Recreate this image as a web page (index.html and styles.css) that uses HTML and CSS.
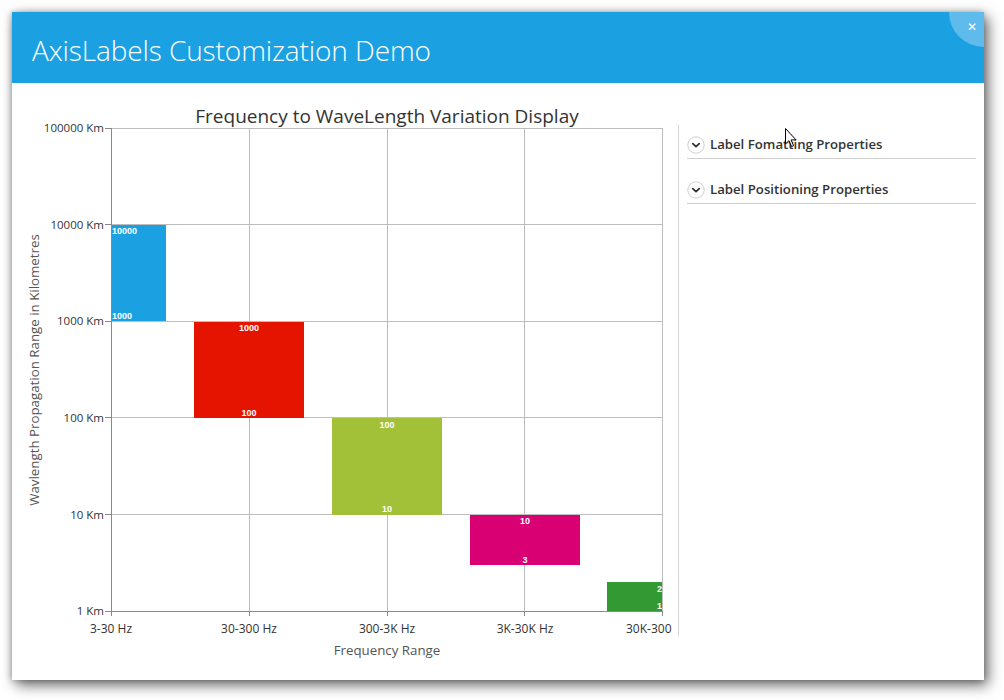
FILE: index.html
```html
<!DOCTYPE html>
<html>
<head>
<meta charset="utf-8">
<link rel="stylesheet" href="styles.css">
</head>
<body>
<div class="window">
  <div class="titlebar">
    <h1 class="title">AxisLabels Customization Demo</h1>
    <div class="close">&#x2715;</div>
  </div>
  <div class="content">
    <svg class="chart" width="660" height="597" viewBox="12 83 660 597">
      <text class="chart-title" x="387" y="123">Frequency to WaveLength Variation Display</text>
      <g class="grid">
        <line x1="111" y1="128.5" x2="662" y2="128.5"/>
        <line x1="111" y1="224.5" x2="662" y2="224.5"/>
        <line x1="111" y1="321.5" x2="662" y2="321.5"/>
        <line x1="111" y1="417.5" x2="662" y2="417.5"/>
        <line x1="111" y1="514.5" x2="662" y2="514.5"/>
        <line x1="249.5" y1="128" x2="249.5" y2="611"/>
        <line x1="387.5" y1="128" x2="387.5" y2="611"/>
        <line x1="524.5" y1="128" x2="524.5" y2="611"/>
        <line x1="662.5" y1="128" x2="662.5" y2="611"/>
      </g>
      <g class="bars">
        <rect x="111" y="225" width="55" height="96" fill="#1ba1e2"/>
        <rect x="194" y="322" width="110" height="96" fill="#e51400"/>
        <rect x="332" y="418" width="110" height="97" fill="#a2c139"/>
        <rect x="470" y="515" width="110" height="50" fill="#d80073"/>
        <rect x="607" y="582" width="55" height="29" fill="#339933"/>
      </g>
      <g class="bar-labels">
        <text x="112" y="234" class="start">10000</text>
        <text x="112" y="319" class="start">1000</text>
        <text x="249" y="331">1000</text>
        <text x="249" y="416">100</text>
        <text x="387" y="428">100</text>
        <text x="387" y="512">10</text>
        <text x="525" y="524">10</text>
        <text x="525" y="563">3</text>
        <text x="662" y="592" class="end">2</text>
        <text x="662" y="609" class="end">1</text>
      </g>
      <g class="axis">
        <line x1="111.5" y1="128" x2="111.5" y2="612"/>
        <line x1="111" y1="611.5" x2="663" y2="611.5"/>
        <line x1="105" y1="128.5" x2="111" y2="128.5"/>
        <line x1="105" y1="224.5" x2="111" y2="224.5"/>
        <line x1="105" y1="321.5" x2="111" y2="321.5"/>
        <line x1="105" y1="417.5" x2="111" y2="417.5"/>
        <line x1="105" y1="514.5" x2="111" y2="514.5"/>
        <line x1="105" y1="611.5" x2="111" y2="611.5"/>
        <line x1="111.5" y1="611" x2="111.5" y2="616"/>
        <line x1="249.5" y1="611" x2="249.5" y2="616"/>
        <line x1="387.5" y1="611" x2="387.5" y2="616"/>
        <line x1="524.5" y1="611" x2="524.5" y2="616"/>
        <line x1="662.5" y1="611" x2="662.5" y2="616"/>
      </g>
      <g class="y-labels">
        <text x="104" y="132">100000 Km</text>
        <text x="104" y="229">10000 Km</text>
        <text x="104" y="325">1000 Km</text>
        <text x="104" y="422">100 Km</text>
        <text x="104" y="519">10 Km</text>
        <text x="104" y="615">1 Km</text>
      </g>
      <g class="x-labels">
        <text x="111" y="633">3-30 Hz</text>
        <text x="249" y="633">30-300 Hz</text>
        <text x="387" y="633">300-3K Hz</text>
        <text x="525" y="633">3K-30K Hz</text>
        <text x="626" y="633" class="start">30K-300</text>
      </g>
      <text class="axis-title" x="387" y="655">Frequency Range</text>
      <text class="axis-title" x="0" y="0" transform="translate(39 370) rotate(-90)">Wavlength Propagation Range in Kilometres</text>
    </svg>
    <div class="panel">
      <div class="expander">
        <span class="chevron"><svg width="18" height="18" viewBox="0 0 18 18"><circle cx="9" cy="9" r="8.2" fill="#fff" stroke="#cfcfcf" stroke-width="1"/><path d="M5.8 7.6 L9 10.6 L12.2 7.6" fill="none" stroke="#333" stroke-width="1.8" stroke-linecap="round" stroke-linejoin="round"/></svg></span>
        <span class="exp-text">Label Fomatting Properties</span>
      </div>
      <div class="expander">
        <span class="chevron"><svg width="18" height="18" viewBox="0 0 18 18"><circle cx="9" cy="9" r="8.2" fill="#fff" stroke="#cfcfcf" stroke-width="1"/><path d="M5.8 7.6 L9 10.6 L12.2 7.6" fill="none" stroke="#333" stroke-width="1.8" stroke-linecap="round" stroke-linejoin="round"/></svg></span>
        <span class="exp-text">Label Positioning Properties</span>
      </div>
    </div>
  </div>
</div>
<svg class="cursor" width="14" height="22" viewBox="0 0 14 22"><path d="M0.5 0.5 L0.5 16 L4 12.6 L6.6 18.6 L8.6 17.7 L6.1 11.9 L11 11.9 Z" fill="#fff" stroke="#000" stroke-width="1" stroke-linejoin="round"/></svg>
</body>
</html>
```
FILE: styles.css
```css
html, body {
  margin: 0;
  padding: 0;
  background: #ffffff;
}
body {
  width: 1004px;
  height: 700px;
  overflow: hidden;
  position: relative;
  font-family: "Open Sans", "Noto Sans", sans-serif;
}
.window {
  margin: 12px 0 0 12px;
  width: 972px;
  height: 668px;
  background: #ffffff;
  box-shadow: 4px 5px 13px rgba(0, 0, 0, 0.6), -1px 0 6px rgba(0, 0, 0, 0.25);
  display: flex;
  flex-direction: column;
}
.titlebar {
  height: 71px;
  background: #1ba1e2;
  position: relative;
  display: flex;
  align-items: center;
  padding-left: 20px;
  flex: none;
}
.title {
  margin: 4px 0 0 0;
  font-weight: 300;
  font-size: 28px;
  color: #ffffff;
  letter-spacing: -0.1px;
}
.close {
  position: absolute;
  top: 0;
  right: 0;
  width: 35px;
  height: 35px;
  border-bottom-left-radius: 35px;
  background: #5ebbec;
  color: #ffffff;
  font-family: "DejaVu Sans", sans-serif;
  font-weight: bold;
  font-size: 12px;
  display: flex;
  justify-content: flex-end;
  padding: 8px 7px 0 0;
  box-sizing: border-box;
}
.content {
  display: flex;
  flex: 1;
}
.chart {
  display: block;
  flex: none;
  overflow: hidden;
}
.chart-title {
  font-family: "Open Sans", sans-serif;
  font-size: 19px;
  fill: #333333;
  text-anchor: middle;
}
.grid line {
  stroke: #bdbdbd;
  stroke-width: 1;
}
.axis line {
  stroke: #8a8a8a;
  stroke-width: 1;
}
.bar-labels text {
  font-family: "Liberation Sans", sans-serif;
  font-weight: bold;
  font-size: 9px;
  fill: #ffffff;
  text-anchor: middle;
}
.bar-labels text.start {
  text-anchor: start;
}
.bar-labels text.end {
  text-anchor: end;
}
.y-labels text {
  font-family: "Open Sans", sans-serif;
  font-size: 11.5px;
  fill: #333333;
  text-anchor: end;
}
.x-labels text {
  font-family: "Open Sans", sans-serif;
  font-size: 12px;
  fill: #333333;
  text-anchor: middle;
}
.x-labels text.start {
  text-anchor: start;
}
.axis-title {
  font-family: "Open Sans", sans-serif;
  font-size: 13.3px;
  fill: #555555;
  text-anchor: middle;
}
.panel {
  margin: 42px 0 44px 6px;
  border-left: 1px solid #d4d4d4;
  padding-left: 8px;
  width: 289px;
  display: flex;
  flex-direction: column;
}
.expander {
  height: 27px;
  border-bottom: 1px solid #cfcfcf;
  display: flex;
  align-items: center;
  gap: 5px;
  margin-top: 17px;
}
.expander:first-child {
  margin-top: 6px;
}
.chevron {
  display: flex;
  width: 18px;
  height: 18px;
}
.exp-text {
  font-family: "Open Sans", sans-serif;
  font-weight: 600;
  font-size: 13.2px;
  color: #333333;
  margin-top: -2px;
}
.cursor {
  position: absolute;
  left: 785px;
  top: 128px;
}
```
